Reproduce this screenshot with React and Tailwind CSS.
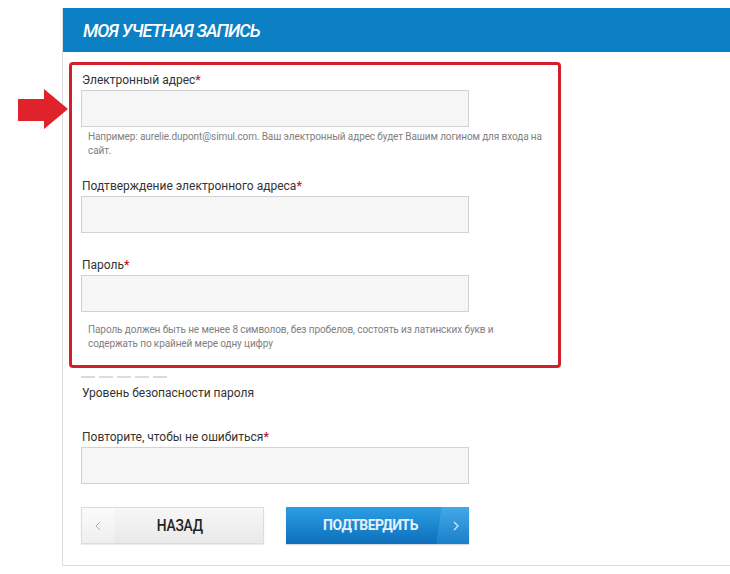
import React from "react";

const font = { fontFamily: "Roboto, 'Noto Sans', sans-serif" };

function Label({ children, className = "" }) {
  return (
    <div className={"text-[12px] leading-[16px] text-[#333] pl-[1px] " + className}>
      {children}
      <span className="text-[#d0112b] font-bold">*</span>
    </div>
  );
}

function Input({ className = "" }) {
  return (
    <div
      className={
        "w-[388px] h-[37px] bg-[#f6f6f6] border border-[#d2d2d2] " + className
      }
    />
  );
}

export default function App() {
  return (
    <div className="relative w-[730px] h-[574px] bg-white overflow-hidden" style={font}>
      {/* red arrow */}
      <svg
        className="absolute left-[17px] top-[88px]"
        width="54"
        height="42"
        viewBox="0 0 54 42"
      >
        <polygon
          points="1,11 27,11 27,1 51,21 27,41 27,33 1,33"
          fill="#e0232b"
        />
      </svg>

      <div className="ml-[62px] mt-[8px] w-[668px] h-[558px] border-l border-b border-[#dedede] flex flex-col">
        <div className="h-[44px] bg-[#0b80c4] flex items-center pl-[20px]">
          <span className="text-white italic font-medium text-[18px] tracking-[-1px] uppercase">
            Моя учетная запись
          </span>
        </div>

        <div className="pl-[6px] pt-[10px]">
          <div className="w-[492px] h-[306px] border-[3px] border-[#d1202c] rounded-[4px] pl-[9px] pt-[7px]">
            <Label>Электронный адрес</Label>
            <Input className="mt-[2px]" />
            <div className="mt-[3px] pl-[7px] text-[10px] leading-[14px] text-[#808080] tracking-[-0.1px]">
              Например: aurelie.dupont@simul.com. Ваш электронный адрес будет Вашим логином для входа на
              <br />
              сайт.
            </div>

            <Label className="mt-[20px]">Подтверждение электронного адреса</Label>
            <Input className="mt-[2px]" />

            <Label className="mt-[24px]">Пароль</Label>
            <Input className="mt-[2px]" />
            <div className="mt-[11px] pl-[7px] text-[10px] leading-[14px] text-[#808080] tracking-[-0.1px]">
              Пароль должен быть не менее 8 символов, без пробелов, состоять из латинских букв и
              <br />
              содержать по крайней мере одну цифру
            </div>
          </div>
        </div>

        <div className="pl-[18px]">
          <div className="mt-[8px] flex gap-[4px]">
            <div className="w-[14px] h-[2px] bg-[#dcdcdc]" />
            <div className="w-[14px] h-[2px] bg-[#dcdcdc]" />
            <div className="w-[14px] h-[2px] bg-[#dcdcdc]" />
            <div className="w-[14px] h-[2px] bg-[#dcdcdc]" />
            <div className="w-[14px] h-[2px] bg-[#dcdcdc]" />
          </div>
          <div className="mt-[7px] text-[12px] leading-[16px] text-[#333] pl-[1px]">
            Уровень безопасности пароля
          </div>

          <Label className="mt-[28px]">Повторите, чтобы не ошибиться</Label>
          <Input className="mt-[2px]" />

          <div className="mt-[23px] flex gap-[22px]">
            <div className="w-[183px] h-[37px] flex border border-[#dcdcdc] bg-gradient-to-b from-[#f7f7f7] to-[#e9e9e9] shadow-[0_1px_1px_rgba(0,0,0,0.08)]">
              <div className="w-[32px] flex items-center justify-center bg-gradient-to-b from-[#fbfbfb] to-[#efefef]">
                <svg width="6" height="10" viewBox="0 0 6 10">
                  <polyline points="5,1 1,5 5,9" fill="none" stroke="#aaa" strokeWidth="1" />
                </svg>
              </div>
              <div className="flex-1 flex items-center justify-center pr-[18px]">
                <span className="inline-block scale-x-[0.86] text-[#222] font-medium text-[16px] tracking-[-0.2px]">
                  НАЗАД
                </span>
              </div>
            </div>

            <div className="relative w-[183px] h-[37px] flex bg-gradient-to-b from-[#2c9ee4] to-[#0d6fbb] shadow-[0_1px_1px_rgba(0,0,0,0.15)] overflow-hidden">
              <div className="flex-1 flex items-center justify-center pl-[12px] text-[#e3f1fb] font-bold text-[14px] tracking-[-0.5px]">
                ПОДТВЕРДИТЬ
              </div>
              <div className="relative w-[26px] flex items-center justify-center bg-gradient-to-b from-[#43a9e7] to-[#1a7fca]">
                <div className="absolute left-[-4px] top-0 h-full w-[10px] -skew-x-[8deg] bg-gradient-to-b from-[#43a9e7] to-[#1a7fca]" />
                <svg className="relative" width="6" height="10" viewBox="0 0 6 10">
                  <polyline points="1,1 5,5 1,9" fill="none" stroke="#d8ecfa" strokeWidth="1.2" />
                </svg>
              </div>
            </div>
          </div>
        </div>
      </div>
    </div>
  );
}
